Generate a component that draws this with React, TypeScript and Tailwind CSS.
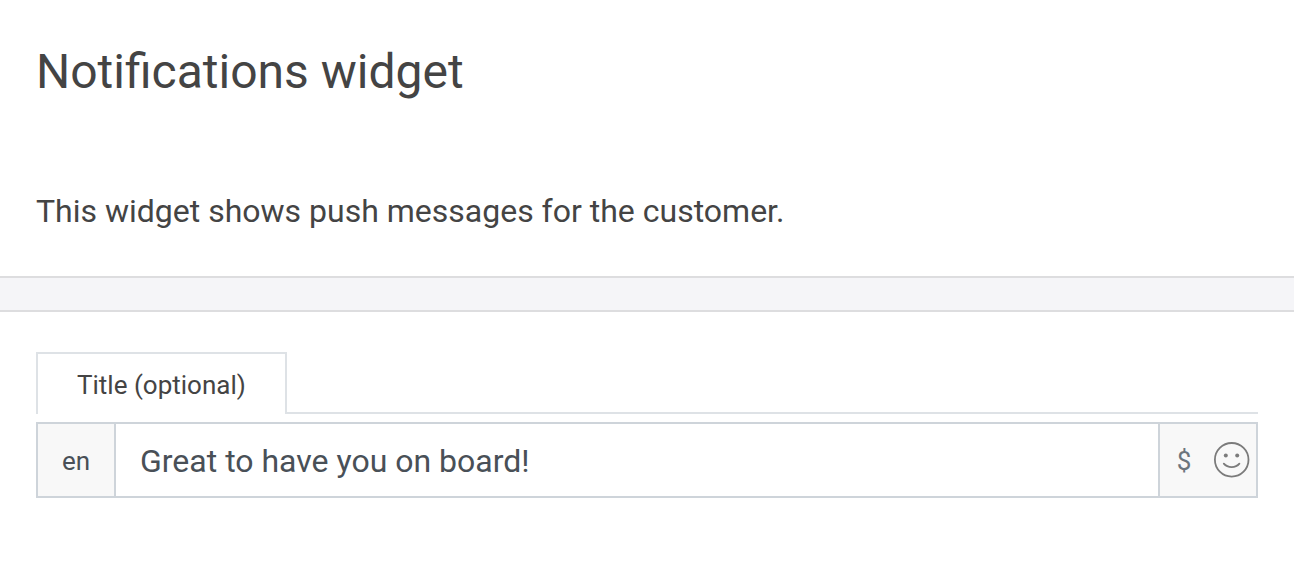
export default function App() {
  return (
    <main className="min-h-screen bg-white font-[Roboto,sans-serif] text-[#444444]">
      <header className="px-9 pt-10 pb-10">
        <h1 className="text-5xl leading-16">Notifications widget</h1>
        <p className="mt-[82px] text-[32px] leading-[50px]">
          This widget shows push messages for the customer.
        </p>
      </header>
      <div className="h-9 border-y-2 border-[#dddddf] bg-[#f5f5f8]" />
      <section className="px-9 pt-10 pb-10">
        <div role="tablist" className="flex h-[62px]">
          <button
            type="button"
            role="tab"
            aria-selected="true"
            className="border-x-2 border-t-2 border-[#dee2e6] px-[39px] pt-0.5 text-[26px] leading-8"
          >
            Title (optional)
          </button>
          <div className="grow border-b-2 border-[#dee2e6]" />
        </div>
        <div className="mt-2 flex h-[76px] border-2 border-[#ced4da] bg-[#f8f8f8]">
          <label
            htmlFor="title"
            className="flex w-[78px] shrink-0 items-center justify-center border-r-2 border-[#ced4da] pt-0.5 text-[26px] text-[#495057]"
          >
            en
          </label>
          <input
            id="title"
            type="text"
            defaultValue="Great to have you on board!"
            className="min-w-0 grow bg-white px-6 pt-0.5 text-[32px] text-[#495057] outline-none"
          />
          <div className="flex shrink-0 items-center border-l-2 border-[#ced4da]">
            <button type="button" aria-label="Insert variable" className="w-12 pt-0.5 text-[26px] text-[#6c757d]">
              $
            </button>
            <button type="button" aria-label="Insert emoji" className="flex w-12 justify-center text-[#7b7b7b]">
              <svg viewBox="0 0 36 36" className="size-9" fill="none" stroke="currentColor" strokeWidth="1.8">
                <circle cx="17.7" cy="17.8" r="16.8" />
                <circle cx="11.8" cy="13.5" r="2" fill="currentColor" stroke="none" />
                <circle cx="23.2" cy="13.5" r="2" fill="currentColor" stroke="none" />
                <path d="M9.8 21.6c4 4.6 11.8 4.6 15.6 0" strokeLinecap="round" />
              </svg>
            </button>
          </div>
        </div>
      </section>
    </main>
  );
}
